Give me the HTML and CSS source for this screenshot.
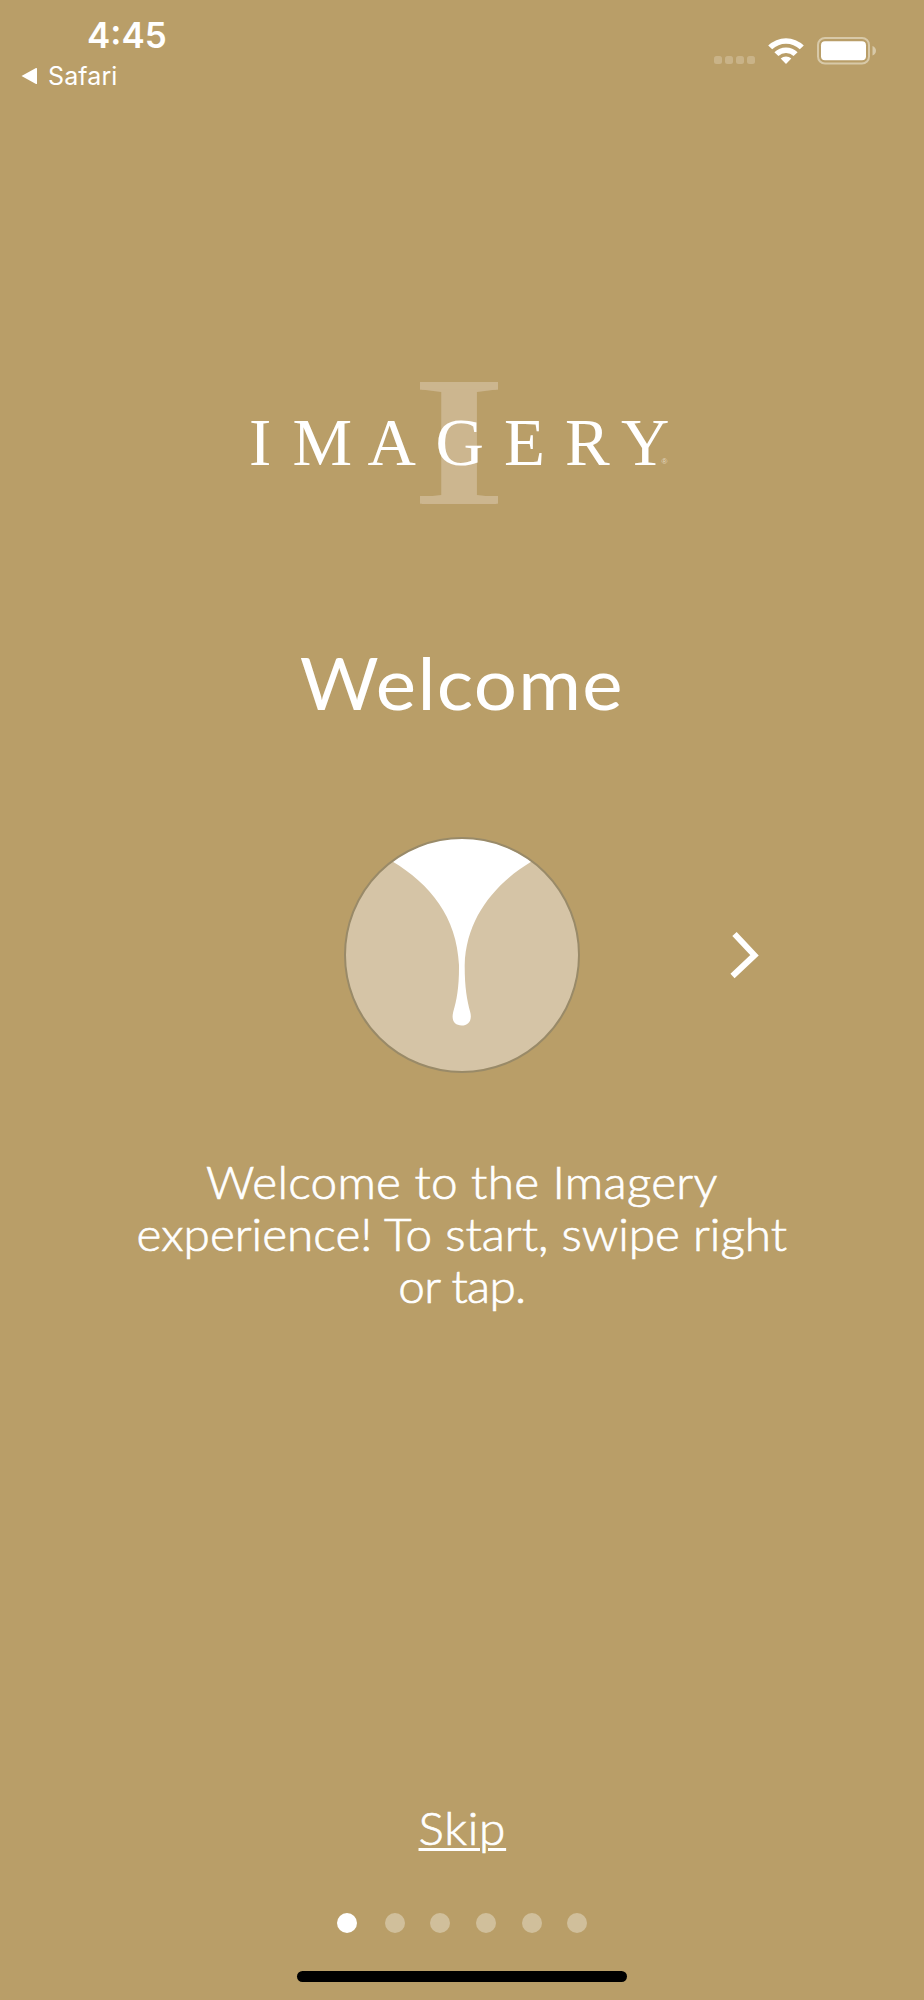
FILE: index.html
```html
<!DOCTYPE html>
<html lang="en">
<head>
    <meta charset="UTF-8">
    <meta name="viewport" content="width=device-width, initial-scale=1.0">
    <title>Imagery - Welcome</title>
    <link rel="stylesheet" href="styles.css">
</head>
<body>
    <!-- Status bar -->
    <header class="status-bar">
        <div class="status-left">
            <div class="time">4:45</div>
            <div class="back-app">
                <svg class="back-arrow" viewBox="0 0 17 18"><path d="M0.5 9 L15 1 Q16 0.6 16 1.6 V16.4 Q16 17.4 15 17 Z"/></svg>
                <span>Safari</span>
            </div>
        </div>
        <div class="status-icons">
            <div class="signal"><i></i><i></i><i></i><i></i></div>
            <svg class="wifi" viewBox="0 0 38 28">
                <path d="M1.2 8.6 A25.5 25.5 0 0 1 36.8 8.6 L32.8 12.3 A20 20 0 0 0 5.2 12.3 Z"/>
                <path d="M7.4 15.2 A16.6 16.6 0 0 1 30.6 15.2 L26.6 19 A11 11 0 0 0 11.4 19 Z"/>
                <path d="M13.7 21.6 A7.6 7.6 0 0 1 24.3 21.6 L19 27 Z"/>
            </svg>
            <svg class="battery" viewBox="0 0 60 28">
                <rect class="battery-case" x="1" y="1" width="51" height="25.5" rx="7"/>
                <rect x="4" y="4.3" width="45" height="19" rx="4"/>
                <path class="battery-cap" d="M55.5 9 Q59 10.5 59 13.7 Q59 17 55.5 18.5 Z"/>
            </svg>
        </div>
    </header>

    <main class="welcome">
        <svg class="logo" viewBox="240 376 440 136" role="img" aria-label="Imagery">
            <text class="logo-initial" transform="translate(459 503.5) scale(1.26 1)">I</text>
            <rect class="logo-slab" x="420" y="382" width="78" height="7.7"/>
            <rect class="logo-slab" x="420" y="496" width="78" height="7.7"/>
            <text class="logo-name" y="464.5" x="249 292.5 367.5 435.5 504 565 621">IMAGERY</text>
            <text class="logo-mark" x="661.5" y="463.5">®</text>
        </svg>

        <h1 class="title">Welcome</h1>

        <div class="slide">
            <svg class="pour" viewBox="0 0 236 236">
                <circle class="pour-back" cx="118" cy="118" r="117"/>
                <path d="M48.5 24.5 A116 116 0 0 1 187.5 24.5 C150 47 122 82 120.7 128 C120.6 150 123 163 126.2 175 C128.5 184 124 188.5 117.7 188.5 C111 188.5 107 184 109.2 175 C112.8 163 115.2 150 115 128 C113 80 86 47 48.5 24.5 Z"/>
                <circle class="pour-ring" cx="118" cy="118" r="117"/>
            </svg>
            <svg class="next" viewBox="0 0 30 48"><path d="M4.5 3 L24.5 24.3 L2.5 45"/></svg>
        </div>

        <p class="message">
            <span class="line line-1">Welcome to the Imagery</span>
            <span class="line line-2">experience! To start, swipe right</span>
            <span class="line line-3">or tap.</span>
        </p>
    </main>

    <footer class="footer">
        <a class="skip" href="#">Skip</a>
        <div class="dots">
            <span class="dot active"></span>
            <span class="dot"></span>
            <span class="dot"></span>
            <span class="dot"></span>
            <span class="dot"></span>
            <span class="dot"></span>
        </div>
        <div class="home-bar"></div>
    </footer>
</body>
</html>
```
FILE: styles.css
```css
* {
    box-sizing: border-box;
}
body {
    display: flex;
    flex-direction: column;
    width: 924px;
    height: 2000px;
    margin: 0;
    background-color: #b99e68;
    color: #fff;
    font-family: Lato, "Open Sans", sans-serif;
}
svg {
    display: block;
    fill: #fff;
    overflow: visible;
}

/* Status bar */
.status-bar {
    display: flex;
    justify-content: space-between;
    height: 100px;
    padding: 14px 47px 0 21px;
    font-family: Inter, sans-serif;
}
.time {
    margin-left: 66px;
    font-size: 35px;
    font-weight: 600;
    line-height: 42px;
}
.back-app {
    display: flex;
    align-items: center;
    gap: 10px;
    margin-top: 5px;
    font-size: 25px;
    line-height: 30px;
    letter-spacing: 0.1px;
}
.back-arrow {
    width: 17px;
    height: 18px;
}
.status-icons {
    display: flex;
    align-items: flex-start;
    padding-top: 22.5px;
}
.signal {
    display: flex;
    gap: 3px;
    margin: 19.5px 12px 0 0;
}
.signal i {
    width: 8px;
    height: 8px;
    border-radius: 2.5px;
    background: #c9b388;
}
.wifi {
    width: 38px;
    height: 28px;
    margin-right: 12px;
}
.battery {
    width: 60px;
    height: 28px;
}
.battery-case {
    fill: none;
    stroke: #d8c9a8;
    stroke-width: 2;
}
.battery-cap {
    fill: #d8c9a8;
}

/* Welcome slide */
.welcome {
    display: flex;
    flex-direction: column;
    align-items: center;
    flex: 1;
    padding-top: 276px;
}
.logo {
    width: 440px;
    height: 136px;
    margin-right: 4px;
}
.logo-initial {
    font: bold 184px "Liberation Serif", serif;
    fill: #ccb68f;
    text-anchor: middle;
}
.logo-slab {
    fill: #ccb68f;
}
.logo-name {
    font: 67px "Liberation Serif", serif;
}
.logo-mark {
    font: 8px "Liberation Sans", sans-serif;
    fill: #e4d8c0;
}
.title {
    margin: 127px 0 0;
    font-size: 72px;
    font-weight: 400;
    line-height: 86px;
    letter-spacing: 1.2px;
    transform: scaleX(1.06);
}
.slide {
    display: grid;
    grid-template-columns: 1fr 236px 1fr;
    align-items: center;
    width: 100%;
    margin-top: 112px;
}
.pour {
    grid-column: 2;
    width: 236px;
    height: 236px;
}
.pour-back {
    fill: #d5c4a6;
}
.pour-ring {
    fill: none;
    stroke: #998a68;
    stroke-width: 2;
}
.next {
    width: 30px;
    height: 48px;
    margin-left: 150px;
}
.next path {
    fill: none;
    stroke: #fff;
    stroke-width: 6;
}
.message {
    margin: 83px 0 0;
    font-size: 45px;
    font-weight: 300;
    line-height: 52px;
    text-align: center;
    transform: scaleX(1.06);
    -webkit-text-stroke: 0.7px #fff;
}
.line {
    display: block;
    white-space: nowrap;
}
.line-1 {
    letter-spacing: 0.25px;
}
.line-3 {
    letter-spacing: -0.7px;
}

/* Skip link, page dots, home bar */
.footer {
    display: flex;
    flex-direction: column;
    align-items: center;
    height: 198px;
}
.skip {
    color: #fff;
    font-size: 45px;
    font-weight: 300;
    line-height: 52px;
    letter-spacing: 0.7px;
    text-decoration-thickness: 3px;
    text-underline-offset: 3px;
    transform: scaleX(1.06);
    -webkit-text-stroke: 0.7px #fff;
}
.dots {
    display: flex;
    gap: 25.7px;
    margin-top: 59px;
}
.dot {
    width: 20px;
    height: 20px;
    border-radius: 50%;
    background: #d0bf9b;
}
.dot.active {
    margin-right: 2.4px;
    background: #fff;
}
.home-bar {
    width: 330px;
    height: 11px;
    margin-top: 38px;
    border-radius: 6px;
    background: #000;
}
```
